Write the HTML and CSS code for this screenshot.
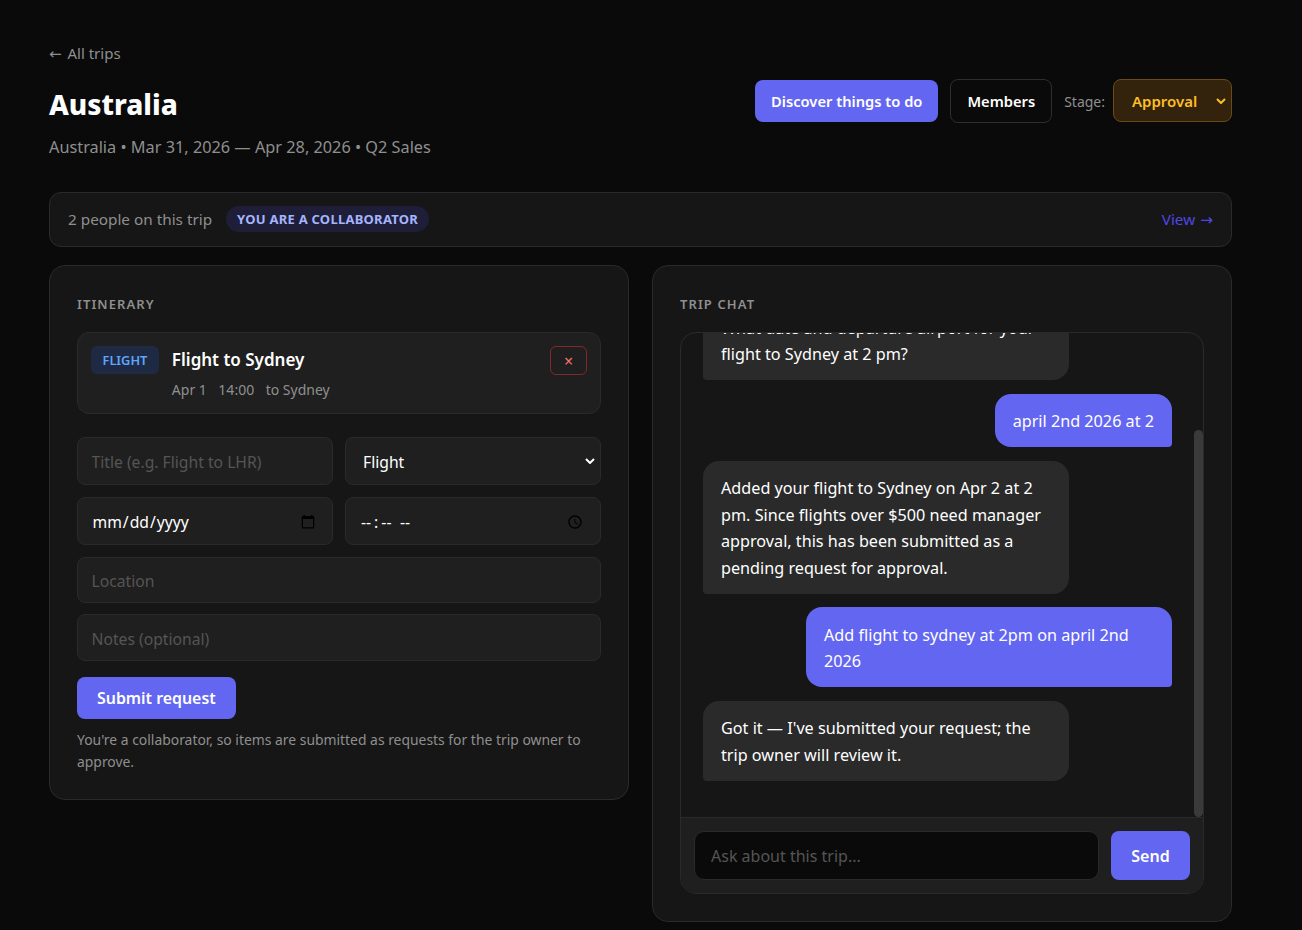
FILE: index.html
```html
<!DOCTYPE html>
<html lang="en">
<head>
    <meta charset="UTF-8">
    <meta name="viewport" content="width=device-width, initial-scale=1.0">
    <title>Australia</title>
    <link rel="stylesheet" href="styles.css">
</head>
<body>
    <div class="container">
        <a class="back-link" href="#"><span class="arrow">←</span> All trips</a>

        <header class="trip-header">
            <div>
                <h1>Australia</h1>
                <div class="trip-meta">Australia • Mar 31, 2026 — Apr 28, 2026 • Q2 Sales</div>
            </div>
            <div class="trip-actions">
                <button class="primary-button">Discover things to do</button>
                <button class="outline-button">Members</button>
                <span class="stage-label">Stage:</span>
                <select class="stage-select">
                    <option>Approval</option>
                </select>
            </div>
        </header>

        <div class="people-bar">
            <div class="people-info">
                <span>2 people on this trip</span>
                <span class="role-badge">YOU ARE A COLLABORATOR</span>
            </div>
            <a class="view-link" href="#">View <span class="arrow">→</span></a>
        </div>

        <div class="columns">
            <section class="panel itinerary-panel">
                <h2 class="panel-title">ITINERARY</h2>
                <div class="item-card">
                    <span class="item-type">FLIGHT</span>
                    <div class="item-body">
                        <div class="item-title">Flight to Sydney</div>
                        <div class="item-meta">
                            <span>Apr 1</span>
                            <span>14:00</span>
                            <span>to Sydney</span>
                        </div>
                    </div>
                    <button class="remove-button">×</button>
                </div>

                <form class="item-form">
                    <div class="form-row">
                        <input class="field" type="text" placeholder="Title (e.g. Flight to LHR)">
                        <select class="field select-field">
                            <option>Flight</option>
                        </select>
                    </div>
                    <div class="form-row">
                        <input class="field" type="date">
                        <input class="field time-field" type="time">
                    </div>
                    <input class="field short-field" type="text" placeholder="Location">
                    <input class="field notes-field" type="text" placeholder="Notes (optional)">
                    <button type="button" class="primary-button submit-button">Submit request</button>
                </form>
                <p class="form-note">You're a collaborator, so items are submitted as requests for the trip owner to approve.</p>
            </section>

            <section class="panel chat-panel">
                <h2 class="panel-title">TRIP CHAT</h2>
                <div class="chat-box">
                    <div class="chat-messages">
                        <div class="bubble bot">What date and departure airport for your flight to Sydney at 2 pm?</div>
                        <div class="bubble user">april 2nd 2026 at 2</div>
                        <div class="bubble bot">Added your flight to Sydney on Apr 2 at 2 pm. Since flights over $500 need manager approval, this has been submitted as a pending request for approval.</div>
                        <div class="bubble user">Add flight to sydney at 2pm on april 2nd 2026</div>
                        <div class="bubble bot">Got it — I've submitted your request; the trip owner will review it.</div>
                        <div class="chat-thumb"></div>
                    </div>
                    <div class="chat-composer">
                        <input class="chat-input" type="text" placeholder="Ask about this trip...">
                        <button class="primary-button send-button">Send</button>
                    </div>
                </div>
            </section>
        </div>
    </div>
</body>
</html>
```
FILE: styles.css
```css
* {
    box-sizing: border-box;
}
html, body {
    height: 930px;
    overflow: hidden;
}
body {
    margin: 0;
    background-color: #0a0a0a;
    color: #fff;
    font-family: "Noto Sans", "Open Sans", Arial, sans-serif;
}
.container {
    width: 1183px;
    margin-left: 49px;
    padding-top: 43px;
}
.arrow {
    font-family: "DejaVu Sans", sans-serif;
}
.back-link {
    display: block;
    height: 21px;
    color: #8f8f8f;
    font-size: 15px;
    line-height: 21px;
    text-decoration: none;
}
.back-link .arrow {
    margin-right: 2px;
}
.trip-header {
    display: flex;
    justify-content: space-between;
    align-items: flex-start;
    margin-top: 15px;
}
h1 {
    margin: 5px 0 0;
    font-size: 28px;
    font-weight: 800;
    line-height: 40px;
}
.trip-meta {
    margin-top: 12px;
    color: #8f8f8f;
    font-size: 16.3px;
    line-height: 22px;
}
.trip-actions {
    display: flex;
    align-items: center;
    gap: 12px;
}
.primary-button {
    height: 42px;
    padding: 0 16px;
    background-color: #6366f1;
    color: #fff;
    border: none;
    border-radius: 8px;
    font-family: inherit;
    font-size: 14.7px;
    font-weight: 600;
}
.outline-button {
    height: 44px;
    padding: 0 16px;
    background-color: transparent;
    color: #fff;
    border: 1px solid #2e2e2e;
    border-radius: 8px;
    font-family: inherit;
    font-size: 14.7px;
    font-weight: 600;
}
.stage-label {
    margin-right: -4px;
    color: #8f8f8f;
    font-size: 14px;
}
.stage-select {
    align-self: flex-start;
    width: 119px;
    height: 43px;
    padding: 0 0 0 18px;
    background-color: #33230d;
    background-image: url("data:image/svg+xml,%3Csvg xmlns='http://www.w3.org/2000/svg' width='10' height='6'%3E%3Cpath d='M1 1l4 4 4-4' fill='none' stroke='%23fbbf24' stroke-width='2'/%3E%3C/svg%3E");
    background-repeat: no-repeat;
    background-position: right 5px top 18px;
    color: #fbbf24;
    border: 1px solid #6b4a14;
    border-radius: 8px;
    appearance: none;
    font-family: inherit;
    font-size: 15px;
    font-weight: 600;
}
.people-bar {
    display: flex;
    justify-content: space-between;
    align-items: center;
    height: 55px;
    margin-top: 34px;
    padding: 0 18px 2px;
    background-color: #161616;
    border: 1px solid #2a2a2a;
    border-radius: 12px;
    font-size: 15.3px;
}
.people-info {
    display: flex;
    align-items: center;
    gap: 14px;
    color: #8f8f8f;
}
.role-badge {
    padding: 4px 11px;
    background-color: #1e1e38;
    color: #a5b4fc;
    border-radius: 13px;
    font-size: 13px;
    font-weight: 700;
    letter-spacing: 0.25px;
    line-height: 18px;
}
.view-link {
    color: #4f46e5;
    font-size: 15.3px;
    text-decoration: none;
}
.view-link .arrow {
    margin-left: 1px;
}
.columns {
    display: grid;
    grid-template-columns: 580px 580px;
    justify-content: space-between;
    align-items: start;
    margin-top: 18px;
}
.panel {
    padding: 29px 27px 27px;
    background-color: #161616;
    border: 1px solid #2a2a2a;
    border-radius: 16px;
}
.itinerary-panel {
    padding-bottom: 26px;
}
.panel-title {
    margin: 0 0 19px;
    color: #8f8f8f;
    font-size: 13px;
    font-weight: 600;
    letter-spacing: 1.1px;
    line-height: 18px;
}
.item-card {
    display: flex;
    align-items: flex-start;
    height: 82px;
    padding: 13px 13px;
    background-color: #1f1f1f;
    border: 1px solid #2a2a2a;
    border-radius: 12px;
}
.item-type {
    padding: 4px 11.5px;
    background-color: #1e2a44;
    color: #60a5fa;
    border-radius: 6px;
    font-size: 12.8px;
    font-weight: 600;
    line-height: 20px;
}
.item-body {
    flex: 1;
    margin-left: 13px;
}
.item-title {
    font-size: 17px;
    font-weight: 600;
    line-height: 28px;
}
.item-meta {
    display: flex;
    gap: 11.5px;
    margin-top: 6px;
    color: #8f8f8f;
    font-size: 14px;
    line-height: 19px;
}
.remove-button {
    width: 37px;
    height: 29px;
    padding: 0;
    background-color: transparent;
    color: #f87171;
    border: 1px solid #7f2a2a;
    border-radius: 6px;
    font-family: inherit;
    font-size: 16px;
}
.item-form {
    display: flex;
    flex-direction: column;
    align-items: flex-start;
    margin-top: 23px;
}
.form-row {
    display: grid;
    grid-template-columns: 256px 256px;
    justify-content: space-between;
    width: 100%;
    margin-bottom: 12px;
}
.field {
    width: 100%;
    height: 48px;
    padding: 2px 14px 0 13.5px;
    background-color: #1f1f1f;
    color: #fff;
    border: 1px solid #2a2a2a;
    border-radius: 8px;
    font-family: inherit;
    font-size: 15.7px;
}
.field::placeholder {
    color: #555;
}
.select-field {
    padding-left: 17px;
    background-image: url("data:image/svg+xml,%3Csvg xmlns='http://www.w3.org/2000/svg' width='10' height='6'%3E%3Cpath d='M1 1l4 4 4-4' fill='none' stroke='%23fff' stroke-width='2'/%3E%3C/svg%3E");
    background-repeat: no-repeat;
    background-position: right 5px top 20px;
    appearance: none;
}
.time-field {
    padding-left: 15px;
}
.time-field::-webkit-datetime-edit-hour-field {
    padding: 0 3px 0 0;
}
.time-field::-webkit-datetime-edit-minute-field {
    padding: 0 0 0 3px;
}
.time-field::-webkit-datetime-edit-ampm-field {
    margin-left: 6px;
    padding: 0 2px 0 0;
}
.short-field {
    height: 46px;
    margin-bottom: 11px;
}
.notes-field {
    height: 47px;
    margin-bottom: 16px;
}
.submit-button {
    padding: 0 20px;
    font-size: 15.9px;
}
.form-note {
    margin: 10px 0 0;
    color: #8f8f8f;
    font-size: 13.9px;
    line-height: 22px;
}
.chat-box {
    display: flex;
    flex-direction: column;
    height: 562px;
    background-color: #161616;
    border: 1px solid #2a2a2a;
    border-radius: 16px;
    overflow: hidden;
}
.chat-messages {
    position: relative;
    flex: 1;
    display: flex;
    flex-direction: column;
    justify-content: flex-end;
    gap: 13.5px;
    min-height: 0;
    padding: 0 31px 36.2px 22px;
    overflow: hidden;
}
.bubble {
    flex-shrink: 0;
    padding: 14.5px 18px 12.5px;
    font-size: 16.2px;
    line-height: 26.5px;
}
.bubble.bot {
    align-self: flex-start;
    width: 366px;
    background-color: #2a2a2a;
    border-radius: 16px 16px 16px 4px;
}
.bubble.user {
    align-self: flex-end;
    max-width: 366px;
    background-color: #6366f1;
    border-radius: 16px 16px 4px 16px;
}
.chat-thumb {
    position: absolute;
    top: 97px;
    right: 0;
    bottom: 0;
    width: 9px;
    background-color: #3a3a3a;
    border-radius: 5px;
}
.chat-composer {
    display: flex;
    gap: 12px;
    height: 76px;
    padding: 13px;
    background-color: #1f1f1f;
    border-top: 1px solid #2a2a2a;
}
.chat-input {
    flex: 1;
    height: 49px;
    padding: 0 16px;
    background-color: #0a0a0a;
    color: #fff;
    border: 1px solid #2a2a2a;
    border-radius: 10px;
    font-family: inherit;
    font-size: 16px;
}
.chat-input::placeholder {
    color: #555;
}
.send-button {
    width: 79px;
    height: 49px;
    padding: 0;
    font-size: 16px;
}
```
